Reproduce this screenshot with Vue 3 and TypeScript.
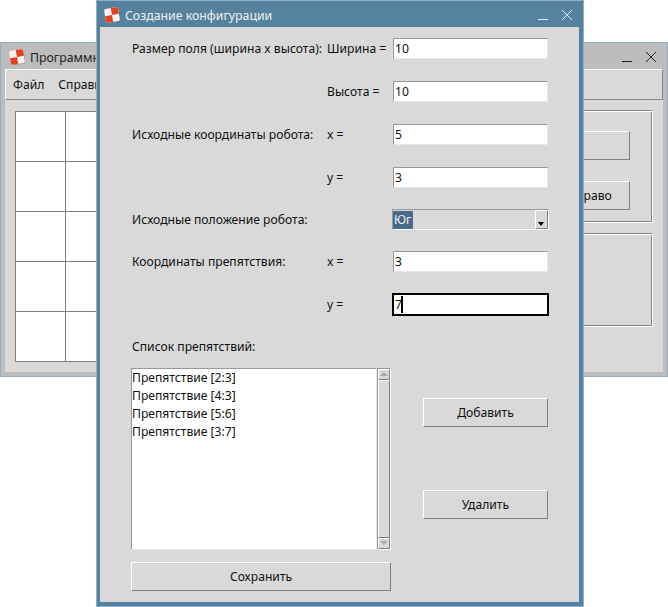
<template>
  <div class="desktop">
    <svg class="defs" width="0" height="0">
      <defs>
        <g id="app-logo" transform="rotate(-10 8 8)">
          <rect x="1.5" y="2.5" width="14" height="13" rx="2" fill="#7a7a7a" opacity="0.6" />
          <rect x="1" y="1" width="14" height="14" rx="2" fill="#f4f4f4" />
          <path d="M8 1h5a2 2 0 0 1 2 2v5H8zM1 8h7v7H3a2 2 0 0 1-2-2z" fill="#e5401c" />
        </g>
      </defs>
    </svg>

    <!-- main window, behind the dialog -->
    <section class="window main-window">
      <header class="titlebar inactive">
        <svg class="app-icon" viewBox="0 0 16 16"><use href="#app-logo" /></svg>
        <span class="title">Программный</span>
        <span class="win-buttons">
          <svg viewBox="0 0 10 10"><path d="M0 9.5h10" /></svg>
          <svg viewBox="0 0 10 10"><path d="M0 0l10 10M10 0L0 10" /></svg>
        </span>
      </header>
      <div class="main-body">
        <nav class="menubar">
          <span>Файл</span>
          <span>Справка</span>
        </nav>
        <div class="main-content">
          <div class="field-grid">
            <div v-for="n in 25" :key="n" class="cell"></div>
          </div>
          <div class="side">
            <div class="group controls">
              <button class="btn wide-btn" type="button">Вперед</button>
              <button class="btn move-btn" type="button">Вправо</button>
            </div>
            <div class="group info"></div>
          </div>
        </div>
      </div>
    </section>

    <!-- config dialog -->
    <section class="window dialog">
      <header class="titlebar">
        <svg class="app-icon" viewBox="0 0 16 16"><use href="#app-logo" /></svg>
        <span class="title">Создание конфигурации</span>
        <span class="win-buttons light">
          <svg viewBox="0 0 10 10"><path d="M0 9.5h10" /></svg>
          <svg viewBox="0 0 10 10"><path d="M0 0l10 10M10 0L0 10" /></svg>
        </span>
      </header>
      <div class="dialog-body">
        <div class="form">
          <template v-for="row in rows" :key="row.id">
            <span class="label">{{ row.label }}</span>
            <span class="sublabel">{{ row.sub }}</span>
            <div v-if="row.combo" class="combo">
              <span class="combo-value">{{ row.value }}</span>
              <span class="combo-arrow"></span>
            </div>
            <div v-else class="entry" :class="{ focused: row.focused }">
              <span>{{ row.value }}</span><i v-if="row.focused" class="caret"></i>
            </div>
          </template>
        </div>
        <p class="list-title">Список препятствий:</p>
        <div class="list-area">
          <div class="list-col">
            <div class="list-wrap">
              <ul class="listbox">
                <li v-for="item in obstacles" :key="item">{{ item }}</li>
              </ul>
              <div class="scrollbar">
                <span class="arrow up"></span>
                <span class="trough"></span>
                <span class="arrow down"></span>
              </div>
            </div>
            <button class="btn save-btn" type="button">Сохранить</button>
          </div>
          <div class="list-actions">
            <button class="btn" type="button">Добавить</button>
            <button class="btn" type="button">Удалить</button>
          </div>
        </div>
      </div>
    </section>
  </div>
</template>

<script setup lang="ts">
interface Row {
  id: number
  label: string
  sub: string
  value: string
  combo?: boolean
  focused?: boolean
}

const rows: Row[] = [
  { id: 1, label: 'Размер поля (ширина x высота):', sub: 'Ширина =', value: '10' },
  { id: 2, label: '', sub: 'Высота =', value: '10' },
  { id: 3, label: 'Исходные координаты робота:', sub: 'x =', value: '5' },
  { id: 4, label: '', sub: 'y =', value: '3' },
  { id: 5, label: 'Исходные положение робота:', sub: '', value: 'Юг', combo: true },
  { id: 6, label: 'Координаты препятствия:', sub: 'x =', value: '3' },
  { id: 7, label: '', sub: 'y =', value: '7', focused: true }
]

const obstacles = ['Препятствие [2:3]', 'Препятствие [4:3]', 'Препятствие [5:6]', 'Препятствие [3:7]']
</script>

<style scoped>
.desktop {
  position: relative;
  width: 668px;
  height: 607px;
  overflow: hidden;
  background: #fff;
  font-family: 'Noto Sans', sans-serif;
  font-size: 12.13px;
  color: #111;
}

.defs {
  position: absolute;
}

.window {
  position: absolute;
  display: flex;
  flex-direction: column;
  box-sizing: border-box;
}

.main-window {
  left: 0;
  top: 42px;
  width: 668px;
  height: 335px;
  background: #bdbdbd;
  border: 1px solid #8fb0c8;
  padding: 0 4px 4px;
}

.dialog {
  left: 96px;
  top: 0;
  width: 488px;
  height: 607px;
  background: #55829f;
  border: 1px solid #8fb0c8;
  padding: 0 4px 4px 3px;
}

.titlebar {
  display: flex;
  align-items: center;
  height: 26px;
  flex: none;
  box-sizing: border-box;
  padding-top: 2px;
  color: #f0f0f0;
  font-size: 12.3px;
}

.titlebar.inactive {
  color: #222;
}

.app-icon {
  width: 16px;
  height: 16px;
  margin: 0 5px 0 4px;
}

.title {
  flex: 1;
  white-space: nowrap;
}

.win-buttons {
  display: flex;
  gap: 14px;
  margin-right: 7px;
}

.win-buttons svg {
  width: 10px;
  height: 10px;
  fill: none;
  stroke: #222;
  stroke-width: 1;
}

.win-buttons.light svg {
  stroke: #eee;
}

.main-body {
  flex: 1;
  display: flex;
  flex-direction: column;
  background: #d9d9d9;
}

.menubar {
  display: flex;
  gap: 14px;
  height: 31px;
  box-sizing: border-box;
  align-items: center;
  padding-left: 7px;
  border: 1px solid;
  border-color: #fff #888 #888 #fff;
}

.main-content {
  display: flex;
  padding: 11px 10px 0 10px;
  justify-content: space-between;
}

.field-grid {
  display: grid;
  grid-template-columns: repeat(5, 50px);
  grid-auto-rows: 50px;
  width: 251px;
  height: 251px;
  box-sizing: border-box;
  background: #fff;
  border-top: 1px solid #808080;
  border-left: 1px solid #808080;
}

.cell {
  box-sizing: border-box;
  border-right: 1px solid #808080;
  border-bottom: 1px solid #808080;
}

.side {
  display: flex;
  flex-direction: column;
  gap: 10px;
  width: 240px;
  margin-top: -1px;
}

.group {
  box-sizing: border-box;
  border: 1px solid;
  border-color: #888 #fff #fff #888;
  box-shadow: inset 1px 1px #fff, inset -1px -1px #888;
}

.controls {
  height: 113px;
  padding: 20px 22px 0 0;
  display: flex;
  flex-direction: column;
  gap: 21px;
  align-items: flex-end;
}

.move-btn {
  width: 80px;
}

.wide-btn {
  width: 200px;
}

.info {
  height: 94px;
}

.btn {
  box-sizing: border-box;
  padding: 0;
  font: inherit;
  color: inherit;
  background: #d9d9d9;
  border: 1px solid;
  border-color: #fff #808080 #808080 #fff;
  height: 29px;
}

.dialog-body {
  flex: 1;
  background: #d9d9d9;
  padding: 11px 0 0 32px;
}

.form {
  display: grid;
  grid-template-columns: 195px 66px 155px;
  grid-template-rows: repeat(4, 21px) 19px 21px 21px;
  row-gap: 22px;
  align-items: center;
}

.entry {
  box-sizing: border-box;
  height: 21px;
  display: flex;
  align-items: center;
  padding-left: 1px;
  background: #fff;
  border: 1px solid;
  border-color: #999 #e8e8e8 #e8e8e8 #999;
}

.entry.focused {
  align-self: start;
  height: 23px;
  margin: -1px 0 0 -1px;
  width: 157px;
  border: 2px solid #000;
  padding-left: 1px;
}

.caret {
  width: 2px;
  height: 17px;
  background: #000;
  margin-left: -1px;
}

.combo {
  box-sizing: border-box;
  align-self: start;
  height: 21px;
  width: 157px;
  margin: -1px 0 0 -1px;
  display: flex;
  align-items: center;
  justify-content: space-between;
  border: 1px solid;
  border-color: #999 #fff #fff #999;
  padding: 0;
}

.combo-value {
  background: #466a87;
  color: #eee;
  height: 18px;
  line-height: 17px;
  padding: 0 1px;
  width: 20px;
  box-sizing: border-box;
}

.combo-arrow {
  position: relative;
  box-sizing: border-box;
  width: 13px;
  height: 19px;
  border: 1px solid;
  border-color: #fff #808080 #808080 #fff;
}

.combo-arrow::after {
  content: '';
  position: absolute;
  left: 2px;
  top: 11px;
  border: 3px solid transparent;
  border-top: 4px solid #000;
  border-bottom: 0;
}

.list-title {
  margin: 23px 0 0;
  height: 17px;
  line-height: 17px;
}

.list-area {
  display: flex;
  margin: 13px 0 0 -1px;
}

.list-col {
  width: 260px;
  display: flex;
  flex-direction: column;
  gap: 12px;
}

.list-wrap {
  display: flex;
  height: 182px;
}

.listbox {
  flex: 1;
  margin: 0;
  padding: 0;
  list-style: none;
  background: #fff;
  border: 1px solid;
  border-color: #999 #e8e8e8 #e8e8e8 #999;
}

.listbox li {
  height: 18px;
  line-height: 18px;
}

.scrollbar {
  width: 14px;
  display: flex;
  flex-direction: column;
  box-sizing: border-box;
  border: 1px solid;
  border-color: #999 #fff #fff #999;
}

.arrow {
  position: relative;
  height: 11px;
  flex: none;
  box-sizing: border-box;
  border: 1px solid;
  border-color: #fff #808080 #808080 #fff;
}

.arrow::after {
  content: '';
  position: absolute;
  left: 1px;
  top: 2px;
  border: 4px solid transparent;
  border-top: 0;
  border-bottom: 4px solid #aaa;
}

.arrow.down::after {
  border-bottom: 0;
  border-top: 4px solid #aaa;
}

.trough {
  flex: 1;
  box-sizing: border-box;
  border: 1px solid;
  border-color: #fff #808080 #808080 #fff;
}

.save-btn {
  width: 260px;
}

.list-actions {
  margin: 30px 0 0 32px;
  width: 125px;
  display: flex;
  flex-direction: column;
  gap: 63px;
}
</style>
